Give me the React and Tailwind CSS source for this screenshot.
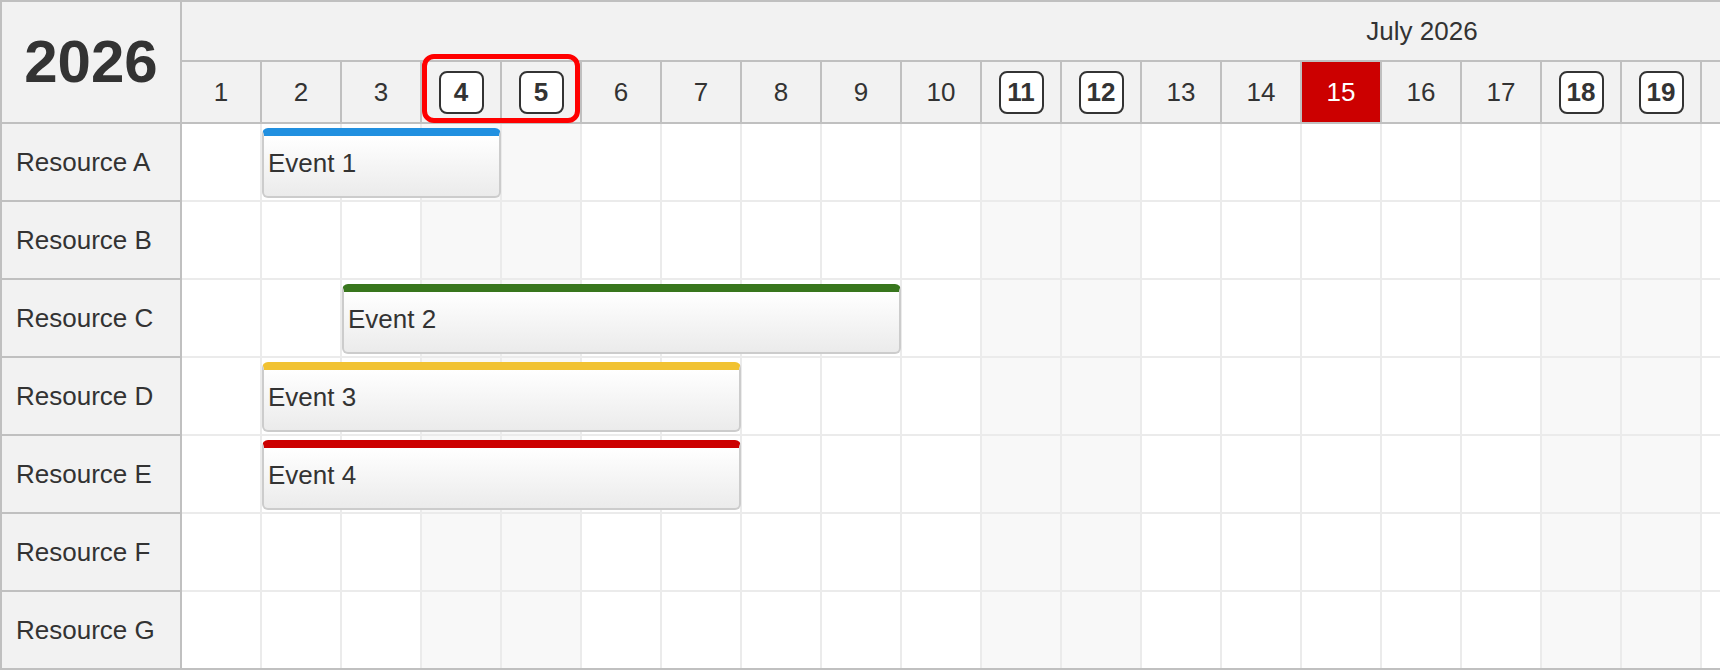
import React from "react";

const days = Array.from({ length: 31 }, (_, i) => i + 1);
const weekends = [4, 5, 11, 12, 18, 19, 25, 26];
const today = 15;

const resources = ["A", "B", "C", "D", "E", "F", "G"];

const events = [
  { row: "A", label: "Event 1", start: 2, end: 4, bar: "border-t-[#2190e0]" },
  { row: "C", label: "Event 2", start: 3, end: 9, bar: "border-t-[#38761d]" },
  { row: "D", label: "Event 3", start: 2, end: 7, bar: "border-t-[#f1c232]" },
  { row: "E", label: "Event 4", start: 2, end: 7, bar: "border-t-[#cc0000]" },
];

const DayHeader = ({ day }) => {
  if (day === today) {
    return (
      <div className="flex h-full w-[80px] shrink-0 items-center justify-center border-r-2 border-[#c0c0c0] bg-[#cc0000] text-white">
        {day}
      </div>
    );
  }
  if (weekends.includes(day)) {
    return (
      <div className="flex h-full w-[80px] shrink-0 items-center justify-center border-r-2 border-[#c0c0c0]">
        <span className="flex h-[43px] w-[45px] items-center justify-center rounded-lg border-2 border-[#333] bg-white font-bold">
          {day}
        </span>
      </div>
    );
  }
  return (
    <div className="flex h-full w-[80px] shrink-0 items-center justify-center border-r-2 border-[#c0c0c0]">
      {day}
    </div>
  );
};

const App = () => {
  return (
    <div className="relative h-[672px] w-[1720px] overflow-hidden bg-white font-['Liberation_Sans',Arial,sans-serif] text-[26px] text-[#333]">
      <div className="flex w-max border-l-2 border-t-2 border-[#c0c0c0]">
        {/* resource column */}
        <div className="flex w-[180px] shrink-0 flex-col border-r-2 border-[#c0c0c0] bg-[#f2f2f2]">
          <div className="flex h-[122px] items-center justify-center border-b-2 border-[#c0c0c0] text-[60px] font-bold">
            2026
          </div>
          {resources.map((r) => (
            <div
              key={r}
              className="flex h-[78px] items-center border-b-2 border-[#c0c0c0] pl-[14px]"
            >
              Resource {r}
            </div>
          ))}
        </div>

        {/* timeline */}
        <div className="flex flex-col">
          <div className="flex h-[60px] items-center justify-center border-b-2 border-[#c0c0c0] bg-[#f2f2f2]">
            July 2026
          </div>
          <div className="flex h-[62px] border-b-2 border-[#c0c0c0] bg-[#f2f2f2]">
            {days.map((d) => (
              <DayHeader key={d} day={d} />
            ))}
          </div>
          {resources.map((r, idx) => (
            <div
              key={r}
              className={`relative flex h-[78px] border-b-2 ${
                idx === resources.length - 1 ? "border-[#c0c0c0]" : "border-[#ebebeb]"
              }`}
            >
              {days.map((d) => (
                <div
                  key={d}
                  className={`h-full w-[80px] shrink-0 border-r-2 border-[#ebebeb] ${
                    weekends.includes(d) ? "bg-[#f8f8f8]" : "bg-white"
                  }`}
                />
              ))}
              {events
                .filter((e) => e.row === r)
                .map((e) => (
                  <div
                    key={e.label}
                    className={`absolute top-[4px] flex h-[70px] items-center rounded-[6px] border-2 border-t-[8px] border-[#cccccc] ${e.bar} bg-linear-to-b from-white to-[#ebebeb] pb-[6px] pl-[4px]`}
                    style={{
                      left: (e.start - 1) * 80,
                      width: (e.end - e.start + 1) * 80 - 1,
                    }}
                  >
                    {e.label}
                  </div>
                ))}
            </div>
          ))}
        </div>
      </div>

      {/* highlight around the first weekend */}
      <div className="absolute left-[422px] top-[54px] h-[69px] w-[158px] rounded-[12px] border-[5px] border-[#ff0000]" />
    </div>
  );
};

export default App;
